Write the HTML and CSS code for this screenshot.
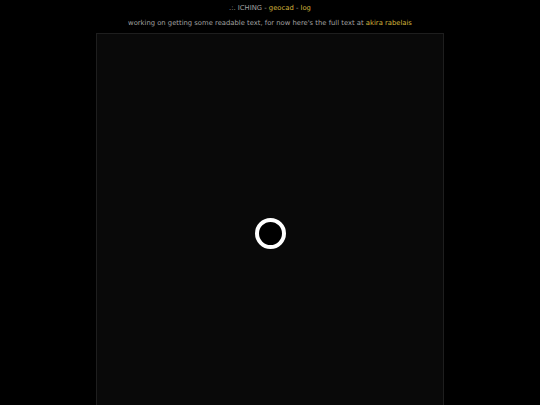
FILE: index.html
```html
<!DOCTYPE html>
<html>
<head>
<meta charset="utf-8">
<link rel="stylesheet" href="styles.css">
</head>
<body>
<div class="nav">.:. ICHING - <a href="#">geocad</a> - <a href="#">log</a></div>
<div class="note">working on getting some readable text, for now here's the full text at <a href="#">akira rabelais</a></div>
<div class="stage">
  <div class="ring"></div>
</div>
</body>
</html>
```

FILE: styles.css
```css
html, body {
  margin: 0;
  padding: 0;
  background: #000;
  height: 100%;
  overflow: hidden;
}
body {
  font-family: "DejaVu Sans", sans-serif;
  font-size: 6.8px;
  color: #a0a0a0;
  text-align: center;
}
a {
  color: #d4b43c;
  text-decoration: none;
}
.nav {
  padding-top: 4px;
  line-height: 9px;
}
.note {
  margin-top: 6px;
  line-height: 9px;
}
.stage {
  width: 348px;
  height: 380px;
  margin: 5px auto 0;
  background: #090909;
  border: 1px solid #1e1e1e;
  display: flex;
  justify-content: center;
  padding-top: 184px;
  box-sizing: border-box;
}
.ring {
  width: 23px;
  height: 23px;
  border: 4px solid #fff;
  border-radius: 50%;
  background: #000;
}
```
